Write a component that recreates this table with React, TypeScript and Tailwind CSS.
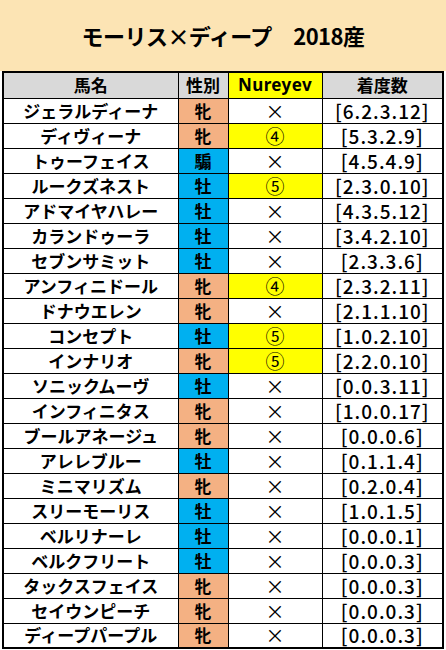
import React from "react";

type Row = {
    name: string;
    sex: string;
    nureyev: string;
    record: string;
};

const rows: Row[] = [
    { name: "ジェラルディーナ", sex: "牝", nureyev: "×", record: "[6.2.3.12]" },
    { name: "ディヴィーナ", sex: "牝", nureyev: "④", record: "[5.3.2.9]" },
    { name: "トゥーフェイス", sex: "騸", nureyev: "×", record: "[4.5.4.9]" },
    { name: "ルークズネスト", sex: "牡", nureyev: "⑤", record: "[2.3.0.10]" },
    { name: "アドマイヤハレー", sex: "牡", nureyev: "×", record: "[4.3.5.12]" },
    { name: "カランドゥーラ", sex: "牡", nureyev: "×", record: "[3.4.2.10]" },
    { name: "セブンサミット", sex: "牡", nureyev: "×", record: "[2.3.3.6]" },
    { name: "アンフィニドール", sex: "牝", nureyev: "④", record: "[2.3.2.11]" },
    { name: "ドナウエレン", sex: "牝", nureyev: "×", record: "[2.1.1.10]" },
    { name: "コンセプト", sex: "牡", nureyev: "⑤", record: "[1.0.2.10]" },
    { name: "インナリオ", sex: "牝", nureyev: "⑤", record: "[2.2.0.10]" },
    { name: "ソニックムーヴ", sex: "牡", nureyev: "×", record: "[0.0.3.11]" },
    { name: "インフィニタス", sex: "牝", nureyev: "×", record: "[1.0.0.17]" },
    { name: "ブールアネージュ", sex: "牝", nureyev: "×", record: "[0.0.0.6]" },
    { name: "アレレブルー", sex: "牡", nureyev: "×", record: "[0.1.1.4]" },
    { name: "ミニマリズム", sex: "牝", nureyev: "×", record: "[0.2.0.4]" },
    { name: "スリーモーリス", sex: "牡", nureyev: "×", record: "[1.0.1.5]" },
    { name: "ベルリナーレ", sex: "牡", nureyev: "×", record: "[0.0.0.1]" },
    { name: "ベルクフリート", sex: "牡", nureyev: "×", record: "[0.0.0.3]" },
    { name: "タックスフェイス", sex: "牝", nureyev: "×", record: "[0.0.0.3]" },
    { name: "セイウンピーチ", sex: "牝", nureyev: "×", record: "[0.0.0.3]" },
    { name: "ディープパープル", sex: "牝", nureyev: "×", record: "[0.0.0.3]" },
];

export default function App() {
    return (
        <main className="w-[446px] h-[650px] bg-white overflow-hidden font-['Noto_Sans_CJK_JP','Noto_Sans',sans-serif] text-black">
            <div className="h-[71px] bg-[#fce4b4] flex items-center justify-center">
                <h1 className="text-[22px] font-bold tracking-tight">モーリス×ディープ　2018産</h1>
            </div>

            <table className="ml-[2px] border-collapse border-2 border-black text-[17px] font-bold leading-[20px]">
                <thead>
                    <tr className="h-[26px] bg-[#d9d9d9]">
                        <th className="w-[175px] border border-black p-0">馬名</th>
                        <th className="w-[50px] border border-black p-0">性別</th>
                        <th className="w-[94px] border border-black p-0 bg-[#ffff00] font-['Noto_Sans',sans-serif] tracking-wide">Nureyev</th>
                        <th className="w-[121px] border border-black p-0">着度数</th>
                    </tr>
                </thead>
                <tbody>
                    {rows.map(r => (
                        <tr key={r.name} className="h-[25px]">
                            <td className="border border-black p-0 text-center">{r.name}</td>
                            <td className={`border border-black p-0 text-center ${r.sex === "牝" ? "bg-[#f4b183]" : "bg-[#00b0f0]"}`}>{r.sex}</td>
                            <td className={`border border-black p-0 text-center font-normal text-[19px] ${r.nureyev === "×" ? "" : "bg-[#ffff00]"}`}>{r.nureyev}</td>
                            <td className="border border-black p-0 text-center font-medium tracking-[1px] text-[19px]">{r.record}</td>
                        </tr>
                    ))}
                </tbody>
            </table>
        </main>
    );
}
